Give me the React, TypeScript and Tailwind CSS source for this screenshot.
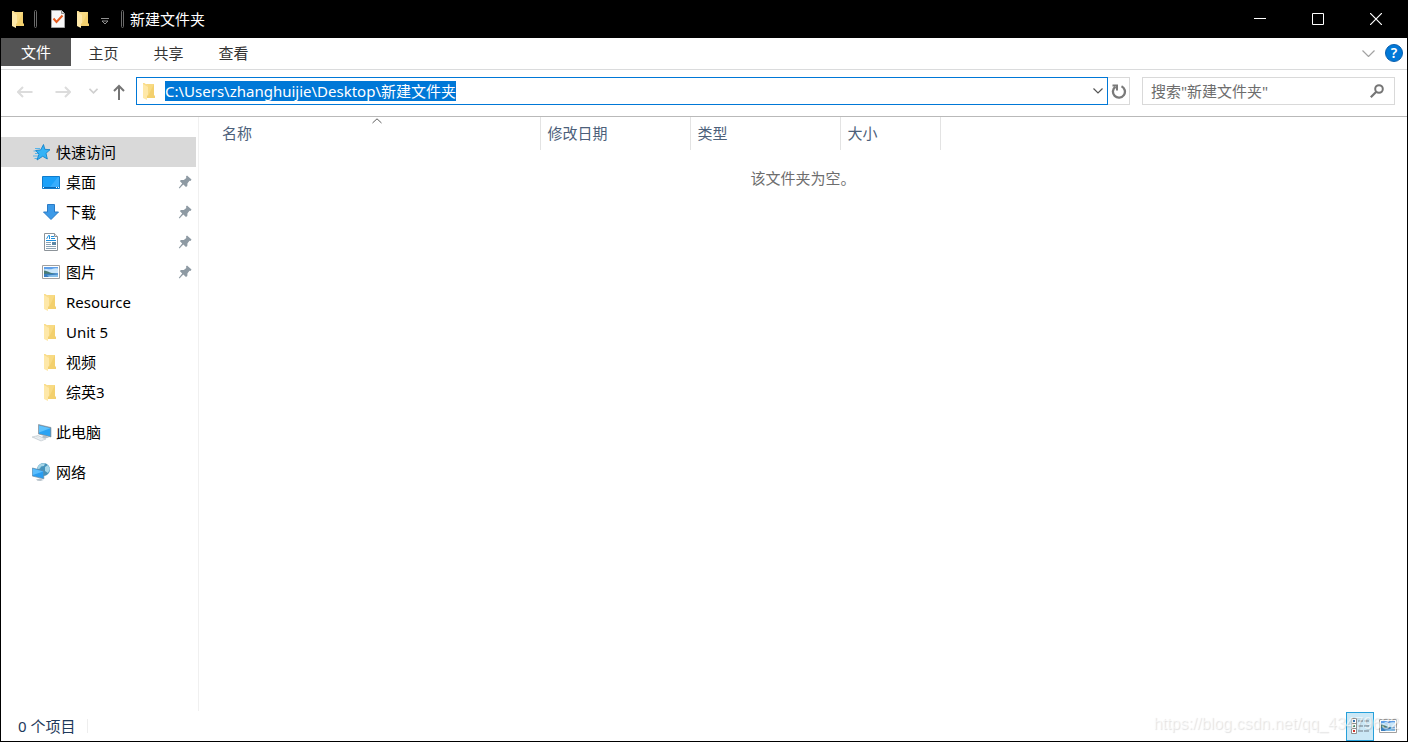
import React, { useEffect, useRef, useState } from 'react';

const FOLDER_NAME = '新建文件夹';
const FOLDER_PATH = 'C:\\Users\\zhanghuijie\\Desktop\\新建文件夹';

type IconName = 'star' | 'desktop' | 'download' | 'document' | 'picture' | 'folder' | 'computer' | 'network';

interface NavItem {
  label: string;
  icon: IconName;
  pinned?: boolean;
}

const quickItems: NavItem[] = [
  { label: '桌面', icon: 'desktop', pinned: true },
  { label: '下载', icon: 'download', pinned: true },
  { label: '文档', icon: 'document', pinned: true },
  { label: '图片', icon: 'picture', pinned: true },
  { label: 'Resource', icon: 'folder' },
  { label: 'Unit 5', icon: 'folder' },
  { label: '视频', icon: 'folder' },
  { label: '综英3', icon: 'folder' },
];

function FolderShape() {
  return (
    <>
      <path d="M3 1h8v11l1 1v2H3z" fill="#f3d06e" />
      <path d="M3 1h8L5 13z" fill="#f8da83" />
      <path d="M0 0h1l4 2.500V12l-1 1v4l-4-2z" fill="#fee8a8" />
      <path d="M0 0h1l4 2.500V4L0 1z" fill="#f9dc8b" />
    </>
  );
}

function FolderIcon() {
  return (
    <svg className="h-[17px] w-3 shrink-0" viewBox="0 0 12 17" aria-hidden="true">
      <FolderShape />
    </svg>
  );
}

function PictureShape() {
  return (
    <>
      <path d="M.5 3.500h17v13H.5z" fill="#fff" stroke="#a0a0a0" />
      <path d="M2 5h14v10H2z" fill="#5f9fe8" />
      <path d="M2 7.500c3-1.500 6 .5 8-.5s4-1 6-.5V11H2z" fill="#c9e6fa" />
      <path d="M2 8.500c2 0 4 1 6 2s5 1 8 1.500v1H2z" fill="#4a7c74" />
      <path d="M2 12c5-.5 9 0 14 0v3H2z" fill="#3b7fc0" />
      <path d="M5 13.500l11-1V15H7z" fill="#85bfe9" />
    </>
  );
}

function NavIcon({ name }: { name: IconName }) {
  return (
    <svg className="h-5 w-5 shrink-0" viewBox="0 0 20 20" aria-hidden="true">
      {name === 'star' && (
        <>
          <path d="M3 6.500h5M1.500 9h5M3 11.500h4M1 14h5M2.500 16.500h3" stroke="#58b4ea" />
          <path
            d="M11.500 2.500l1.300 4.800 5.200.4-4 3.600 1.300 5.700-4.600-2.700-5.700 3.700 2-5.900-3.300-3.600 5-.6z"
            fill="#35b3f6"
            stroke="#1583ca"
            strokeWidth="0.900"
          />
        </>
      )}
      {name === 'desktop' && (
        <>
          <path d="M.5 4.500h17v12H.5z" fill="#1ba1f9" stroke="#0f7bcb" />
          <path d="M8 15L16 5h1v10z" fill="#38adfd" />
          <path d="M1 15h16v1H1z" fill="#0b68b5" />
          <path d="M1 15.500h1M14 15.500h1M16 15.500h1" stroke="#fff" />
        </>
      )}
      {name === 'download' && (
        <path d="M5.500 2.500h7v7.500h4L9 17.500 1.500 10h4z" fill="#3c9ae8" stroke="#2a7bc6" />
      )}
      {name === 'document' && (
        <>
          <path d="M2.500 1.500h10l3 3v14h-13z" fill="#fff" stroke="#8c9399" />
          <path d="M12.500 1.500v3h3" fill="#e3e7ea" stroke="#8c9399" />
          <path d="M4.500 7l2-3.500h1V7M9 4.500h3M9 6.500h4M4 8.500h10" fill="none" stroke="#1e8fdc" />
          <path d="M4 10.500h5M4 12.500h5M4 14.500h10M4 16.500h10" stroke="#8ba3b5" />
          <path d="M10 10h4v3h-4z" fill="#5c87a5" />
        </>
      )}
      {name === 'picture' && <PictureShape />}
      {name === 'folder' && (
        <g transform="translate(2 2)">
          <FolderShape />
        </g>
      )}
      {name === 'computer' && (
        <>
          <path d="M6.500 2.500l12.500 3v9.500l-12.500-3z" fill="#7d96a8" stroke="#687d8c" strokeWidth="0.500" />
          <path d="M7 3.400l11.300 2.800v8L7 11.500z" fill="#2ba3f3" />
          <path d="M7 3.400l11.300 2.800L7 10.500z" fill="#5fc2fc" />
          <path d="M11 13.200l4 1 2 1.300-4 1-3-1z" fill="#b4bfc7" />
          <path d="M0 15l6-1.500 8 3.500-5 2z" fill="#dce2e6" stroke="#b5bec5" strokeWidth="0.500" />
          <path d="M3 15l7 3M5.500 14.500l6 2.800" stroke="#f9fafb" strokeWidth="0.600" />
        </>
      )}
      {name === 'network' && (
        <>
          <circle cx="11.500" cy="7.500" r="6.500" fill="#4592ba" />
          <path d="M6 4.500c2-3 5-3.500 7-3l-1 2.500-3 .5-1 2-3 1zM13 5l3-2 2 4-2 4-3-2z" fill="#a6d6e8" />
          <path d="M4 17.500l4-1 3.500 1.500-3 1-3-.3z" fill="#b8c3cb" />
          <path d="M.3 6l11.500 2.800v8L.3 14z" fill="#2a9df0" stroke="#6c8ba1" strokeWidth="0.700" />
          <path d="M.8 6.800l10.500 2.600L.8 13z" fill="#5bbdfc" />
        </>
      )}
    </svg>
  );
}

function PinIcon() {
  return (
    <svg className="h-[14px] w-[14px] shrink-0" viewBox="0 0 14 14" role="img" aria-label="已固定">
      <path
        d="M9 .5L13.500 4.500 12.500 6 11.500 5.800 9.500 8.300 9.300 11 8 12 5.300 9.500 1.500 13.500 .8 12.800 4.200 8.500 1.800 6 3 5 5.800 5 8.300 3 8 1.500z"
        fill="#8e9aa3"
      />
    </svg>
  );
}

function NavRow({ item, level, active }: { item: NavItem; level: number; active?: boolean }) {
  return (
    <button
      type="button"
      className={`flex h-[30px] w-full items-center gap-1 pr-1 text-left text-black ${
        level === 0 ? 'pl-[31px]' : 'pl-[41px]'
      } ${active ? 'bg-[#d9d9d9]' : 'bg-white'}`}
    >
      <NavIcon name={item.icon} />
      <span className="flex-1">{item.label}</span>
      {item.pinned && <PinIcon />}
    </button>
  );
}

function TitleBar() {
  return (
    <header className="flex h-[38px] items-center justify-between bg-black text-white">
      <div className="flex items-center pl-3">
        <FolderIcon />
        <span className="ml-[10px] h-[18px] w-[3px] rounded-sm border border-[#6b6b6b]" />
        <button type="button" aria-label="属性" className="ml-[14px]">
          <svg className="h-[18px] w-[14px]" viewBox="0 0 14 18">
            <path d="M.5 .5h10l3 3v14H.5z" fill="#f8f8f8" stroke="#a3a3a3" />
            <path d="M10.500 .5v3h3" fill="#d9d9d9" stroke="#8c8c8c" />
            <path d="M2.500 8.500l3 3.500 6-6.500" fill="none" stroke="#e65a1e" strokeWidth="2" />
          </svg>
        </button>
        <button type="button" aria-label="新建文件夹" className="ml-3">
          <FolderIcon />
        </button>
        <button type="button" aria-label="自定义快速访问工具栏" className="ml-3 pt-1">
          <svg className="h-2 w-2" viewBox="0 0 8 8" fill="none" stroke="#a0a0a0" strokeWidth="0.900">
            <path d="M0 1.500h8M1 4h6L4 7z" />
          </svg>
        </button>
        <span className="ml-3 h-[18px] w-[3px] rounded-sm border border-[#6b6b6b]" />
        <h1 className="ml-[6px]">{FOLDER_NAME}</h1>
      </div>
      <div className="flex h-full pr-[3px]">
        <button type="button" aria-label="最小化" className="flex w-[58px] items-center justify-center">
          <svg className="h-3 w-3" viewBox="0 0 12 12">
            <path d="M0 5.500h12" stroke="#fff" />
          </svg>
        </button>
        <button type="button" aria-label="最大化" className="flex w-[58px] items-center justify-center">
          <svg className="h-3 w-3" viewBox="0 0 12 12">
            <path d="M.5 .5h11v11H.5z" fill="none" stroke="#fff" />
          </svg>
        </button>
        <button type="button" aria-label="关闭" className="flex w-[58px] items-center justify-center">
          <svg className="h-3 w-3" viewBox="0 0 12 12">
            <path d="M0 0l12 12M12 0L0 12" stroke="#fff" strokeWidth="1.200" />
          </svg>
        </button>
      </div>
    </header>
  );
}

function RibbonTabs() {
  return (
    <div className="flex h-8 items-start border-b border-[#dadbdc] text-[#333333]">
      <button type="button" className="h-7 w-[70px] bg-[#545454] text-white">文件</button>
      <button type="button" className="h-[30px] w-[65px]">主页</button>
      <button type="button" className="h-[30px] w-[65px]">共享</button>
      <button type="button" className="h-[30px] w-[65px]">查看</button>
      <div className="ml-auto flex h-[30px] items-center gap-[10px] pr-1">
        <button type="button" aria-label="展开功能区">
          <svg className="h-[7px] w-[13px]" viewBox="0 0 13 7" fill="none" stroke="#a3a3a3" strokeWidth="1.200">
            <path d="M.5 .5l6 6 6-6" />
          </svg>
        </button>
        <button
          type="button"
          aria-label="帮助"
          className="flex h-[18px] w-[18px] items-center justify-center rounded-full border border-[#0a5fae] bg-[#0078d7] text-sm font-semibold leading-4 text-white"
        >
          ?
        </button>
      </div>
    </div>
  );
}

function AddressBar() {
  const [path, setPath] = useState(FOLDER_PATH);
  const [query, setQuery] = useState('');
  const pathRef = useRef<HTMLInputElement>(null);

  // The path is ready to be overwritten as soon as the window opens
  useEffect(() => {
    pathRef.current?.focus();
    pathRef.current?.setSelectionRange(0, FOLDER_PATH.length);
  }, []);

  return (
    <div className="flex border-b border-[#b9b9b9] pt-[7px] pr-3 pb-[11px] pl-[5px]">
      <button type="button" aria-label="后退" disabled className="flex w-[38px] items-center justify-center">
        <svg className="h-[14px] w-4" viewBox="0 0 16 14" fill="none" stroke="#dcdcdc" strokeWidth="2">
          <path d="M15.500 8H1.500M6 3L1 8l5 5" />
        </svg>
      </button>
      <button type="button" aria-label="前进" disabled className="flex w-[38px] items-center justify-center">
        <svg className="h-[14px] w-4" viewBox="0 0 16 14" fill="none" stroke="#dcdcdc" strokeWidth="2">
          <path d="M.5 8h14M10 3l5 5-5 5" />
        </svg>
      </button>
      <button type="button" aria-label="最近浏览的位置" disabled className="flex w-[22px] items-center justify-center">
        <svg className="h-[6px] w-[9px]" viewBox="0 0 9 6" fill="none" stroke="#cfcfcf" strokeWidth="1.600">
          <path d="M.5 .8l4 4 4-4" />
        </svg>
      </button>
      <button type="button" aria-label="上移" className="flex w-[30px] items-center justify-center pt-px">
        <svg className="h-4 w-3" viewBox="0 0 12 16" fill="none" stroke="#757575" strokeWidth="2">
          <path d="M6 16V2M1 7l5-5 5 5" />
        </svg>
      </button>
      <div className="ml-[2px] flex h-7 flex-1 items-center border border-[#0078d7] pl-[6px]">
        <FolderIcon />
        <input
          ref={pathRef}
          type="text"
          aria-label="地址"
          spellCheck={false}
          value={path}
          onChange={(e) => setPath(e.target.value)}
          className="ml-[10px] h-5 min-w-0 flex-1 bg-white leading-5 text-black outline-none selection:bg-[#0078d7] selection:text-white"
        />
        <button type="button" aria-label="以前的位置" className="flex h-full w-[19px] items-center justify-center">
          <svg className="h-[6px] w-[10px]" viewBox="0 0 10 6" fill="none" stroke="#555555" strokeWidth="1.200">
            <path d="M.5 .5L5 5 9.500 .5" />
          </svg>
        </button>
      </div>
      <button
        type="button"
        aria-label="刷新"
        className="flex h-7 w-[22px] items-center justify-center border border-l-0 border-[#d9d9d9]"
      >
        <svg className="h-4 w-4" viewBox="0 0 16 16" fill="none" stroke="#7a7a7a" strokeWidth="2">
          <path d="M10.500 3.200A6 6 0 1 1 4.500 3.700" strokeWidth="2.300" />
          <path d="M1.500 2.500h4.500v5" />
        </svg>
      </button>
      <div className="ml-3 flex h-7 w-[253px] items-center border border-[#d9d9d9] pl-2 pr-[10px]">
        <input
          type="text"
          aria-label="搜索"
          placeholder={`搜索"${FOLDER_NAME}"`}
          value={query}
          onChange={(e) => setQuery(e.target.value)}
          className="h-5 min-w-0 flex-1 bg-white leading-5 text-black outline-none placeholder:text-[#6d6d6d]"
        />
        <svg className="h-[14px] w-[14px]" viewBox="0 0 14 14" fill="none" stroke="#757575" strokeWidth="2" aria-hidden="true">
          <circle cx="9" cy="5" r="3.800" />
          <path d="M6.300 7.700L.8 13.200" strokeWidth="2.200" />
        </svg>
      </div>
    </div>
  );
}

function FileList() {
  return (
    <main className="min-w-0 flex-1">
      <table className="w-full table-fixed border-collapse text-left text-[#4c607a]">
        <colgroup>
          <col className="w-[341px]" />
          <col className="w-[150px]" />
          <col className="w-[150px]" />
          <col className="w-[100px]" />
          <col />
        </colgroup>
        <thead>
          <tr className="h-[33px]">
            <th scope="col" aria-sort="ascending" className="relative border-r border-[#e3e3e3] pb-[2px] pl-[23px] font-normal">
              名称
              <svg
                className="absolute top-[1px] left-[173px] h-[6px] w-[10px]"
                viewBox="0 0 10 6"
                fill="none"
                stroke="#5c5c5c"
                aria-hidden="true"
              >
                <path d="M.5 5L5 .8 9.500 5" />
              </svg>
            </th>
            <th scope="col" className="border-r border-[#e3e3e3] pb-[2px] pl-[7px] font-normal">修改日期</th>
            <th scope="col" className="border-r border-[#e3e3e3] pb-[2px] pl-[7px] font-normal">类型</th>
            <th scope="col" className="border-r border-[#e3e3e3] pb-[2px] pl-[7px] font-normal">大小</th>
            <td />
          </tr>
        </thead>
        <tbody>
          <tr>
            <td colSpan={5} className="pt-[18px] text-center text-[#6d6d6d]">该文件夹为空。</td>
          </tr>
        </tbody>
      </table>
    </main>
  );
}

function StatusBar() {
  return (
    <footer className="flex h-[30px] items-center justify-between pr-[10px] pl-[17px] text-[#1e395b]">
      <span className="flex items-center gap-3">
        0 个项目
        <span className="h-[14px] w-px bg-[#eeeeee]" />
      </span>
      <span className="flex items-center gap-[5px]">
        <button
          type="button"
          aria-label="详细信息"
          className="flex h-[29px] w-7 items-center justify-center border border-[#26a0da] bg-[#cbe8f6]"
        >
          <svg className="h-4 w-[18px]" viewBox="0 0 18 16">
            <path d="M.5 .5h5v15h-5zM.5 5.500h5M.5 10.500h5" fill="#fff" stroke="#8f8f8f" />
            <path d="M2 2h2v2H2z" fill="#3a76b0" />
            <path d="M2 7h2v2H2z" fill="#3c9477" />
            <path d="M2 12h2v2H2z" fill="#d0342c" />
            <path d="M7 3h5M13 3h5M7 8h5M13 8h5M7 13h5M13 13h5" stroke="#6e7b85" />
          </svg>
        </button>
        <button type="button" aria-label="大图标">
          <svg className="h-[14px] w-[18px]" viewBox="0 3 18 14">
            <PictureShape />
          </svg>
        </button>
      </span>
    </footer>
  );
}

export default function App() {
  return (
    <div className="relative flex min-h-screen flex-col bg-white font-['Noto_Sans','Noto_Sans_CJK_SC',sans-serif] text-[15px] leading-5">
      <TitleBar />
      <div className="flex flex-1 flex-col border-x border-b border-black">
        <RibbonTabs />
        <AddressBar />
        <div className="flex flex-1">
          <nav className="w-[198px] shrink-0 border-r border-[#f0f0f0] pt-5 pr-[2px]">
            <NavRow item={{ label: '快速访问', icon: 'star' }} level={0} active />
            {quickItems.map((item) => (
              <NavRow key={item.label} item={item} level={1} />
            ))}
            <div className="mt-[10px] flex flex-col gap-[10px]">
              <NavRow item={{ label: '此电脑', icon: 'computer' }} level={0} />
              <NavRow item={{ label: '网络', icon: 'network' }} level={0} />
            </div>
          </nav>
          <FileList />
        </div>
        <StatusBar />
      </div>
      <span className="pointer-events-none absolute right-[9px] bottom-[6px] font-['Liberation_Sans',sans-serif] text-base text-white/60 [text-shadow:1px_1px_1px_#0000001f]">
        https://blog.csdn.net/qq_43479632
      </span>
    </div>
  );
}
